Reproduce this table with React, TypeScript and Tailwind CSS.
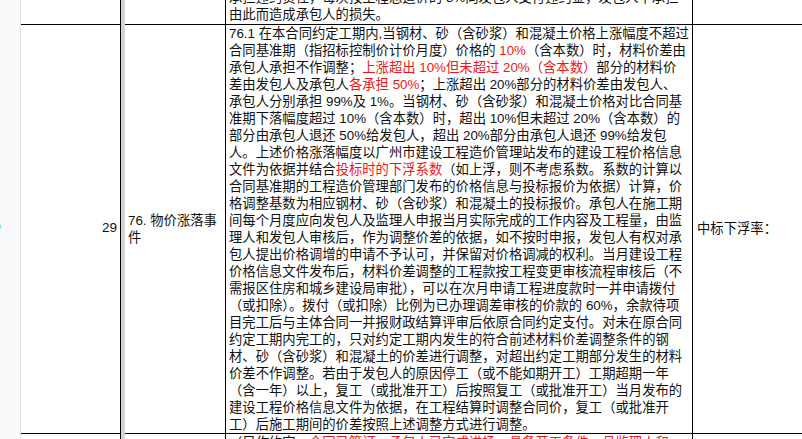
import React from "react";

type Seg = [string, boolean?];
type Line = Seg[];

const R = true;

const topLines: Line[] = [
  [["承担违约责任，每次按工程总造价的 3%向发包人支付违约金，发包人不承担"]],
  [["由此而造成承包人的损失。"]],
];

const mainLines: Line[] = [
  [["76.1 在本合同约定工期内,当钢材、砂（含砂浆）和混凝土价格上涨幅度不超过"]],
  [["合同基准期（指招标控制价计价月度）价格的 "], ["10%", R], ["（含本数）时，材料价差由"]],
  [["承包人承担不作调整；"], ["上涨超出 10%但未超过 20%（含本数）", R], ["部分的材料价"]],
  [["差由发包人及承包人"], ["各承担 50%", R], ["；上涨超出 20%部分的材料价差由发包人、"]],
  [["承包人分别承担 99%及 1%。当钢材、砂（含砂浆）和混凝土价格对比合同基"]],
  [["准期下落幅度超过 10%（含本数）时，超出 10%但未超过 20%（含本数）的"]],
  [["部分由承包人退还 50%给发包人，超出 20%部分由承包人退还 99%给发包"]],
  [["人。上述价格涨落幅度以广州市建设工程造价管理站发布的建设工程价格信息"]],
  [["文件为依据并结合"], ["投标时的下浮系数", R], ["（如上浮，则不考虑系数。系数的计算以"]],
  [["合同基准期的工程造价管理部门发布的价格信息与投标报价为依据）计算，价"]],
  [["格调整基数为相应钢材、砂（含砂浆）和混凝土的投标报价。承包人在施工期"]],
  [["间每个月度应向发包人及监理人申报当月实际完成的工作内容及工程量，由监"]],
  [["理人和发包人审核后，作为调整价差的依据，如不按时申报，发包人有权对承"]],
  [["包人提出价格调增的申请不予认可，并保留对价格调减的权利。当月建设工程"]],
  [["价格信息文件发布后，材料价差调整的工程款按工程变更审核流程审核后（不"]],
  [["需报区住房和城乡建设局审批），可以在次月申请工程进度款时一并申请拨付"]],
  [["（或扣除）。拨付（或扣除）比例为已办理调差审核的价款的 60%，余款待项"]],
  [["目完工后与主体合同一并报财政结算评审后依原合同约定支付。对未在原合同"]],
  [["约定工期内完工的，只对约定工期内发生的符合前述材料价差调整条件的钢"]],
  [["材、砂（含砂浆）和混凝土的价差进行调整，对超出约定工期部分发生的材料"]],
  [["价差不作调整。若由于发包人的原因停工（或不能如期开工）工期超期一年"]],
  [["（含一年）以上，复工（或批准开工）后按照复工（或批准开工）当月发布的"]],
  [["建设工程价格信息文件为依据，在工程结算时调整合同价，复工（或批准开"]],
  [["工）后施工期间的价差按照上述调整方式进行调整。"]],
];

const bottomLines: Line[] = [
  [["（只作约定，"], ["合同已签订，承包人已完成进场，具备开工条件，且监理人和", R]],
];

function Lines({ lines }: { lines: Line[] }) {
  return (
    <>
      {lines.map((line, i) => (
        <div key={i} className="h-[17px] leading-[17px] whitespace-nowrap">
          {line.map(([t, red], j) => (
            <span key={j} className={red ? "text-[#e8191c]" : ""}>
              {t}
            </span>
          ))}
        </div>
      ))}
    </>
  );
}

function Row({
  height,
  col2,
  col3,
  col4,
  col5,
  align = "center",
  bottomBorder = true,
}: {
  height: number;
  col2?: React.ReactNode;
  col3?: React.ReactNode;
  col4: React.ReactNode;
  col5?: React.ReactNode;
  align?: "center" | "end" | "start";
  bottomBorder?: boolean;
}) {
  const b = bottomBorder ? "border-b border-black" : "";
  const col4Align = align === "end" ? "justify-end pb-[1px]" : "justify-start";
  return (
    <div className="flex shrink-0" style={{ height }}>
      <div className={`w-[100px] border-r border-black ${b} flex items-center justify-end pr-[3px] overflow-hidden`}>
        {col2}
      </div>
      <div className="w-[4px] bg-[#d4d4d4]" />
      <div className={`w-[101px] border-r border-black ${b} flex items-center pl-[3px] overflow-hidden`}>
        <div>{col3}</div>
      </div>
      <div className={`w-[467px] border-r border-black ${b} flex flex-col ${col4Align} pl-[3px] overflow-hidden`}>
        {col4}
      </div>
      <div className={`flex-1 ${b} flex items-center pl-[4px] overflow-hidden`}>{col5}</div>
    </div>
  );
}

export default function App() {
  return (
    <div
      className="w-[802px] h-[439px] overflow-hidden bg-white flex text-[13.33px] text-[#111]"
      style={{ fontFamily: '"Liberation Sans", "Noto Sans CJK SC", sans-serif' }}
    >
      <div className="w-[21px] shrink-0 bg-[#f8f9fa] border-r border-[#e1e1e1] flex items-center overflow-hidden">
        <span className="-ml-[6px] mt-[14px] text-[12px] text-[#444]">0</span>
      </div>
      <div className="flex-1 flex flex-col overflow-hidden">
        <Row height={25} align="end" col4={<Lines lines={topLines} />} />
        <Row
          height={409}
          col2={<span className="text-[13.5px] mt-[-2px]">29</span>}
          col3={
            <>
              <div className="h-[17px] leading-[17px] whitespace-nowrap">76. 物价涨落事</div>
              <div className="h-[17px] leading-[17px] whitespace-nowrap">件</div>
            </>
          }
          col4={<Lines lines={mainLines} />}
          col5={<span className="whitespace-nowrap">中标下浮率：</span>}
        />
        <Row height={40} align="start" bottomBorder={false} col4={<Lines lines={bottomLines} />} />
      </div>
    </div>
  );
}
